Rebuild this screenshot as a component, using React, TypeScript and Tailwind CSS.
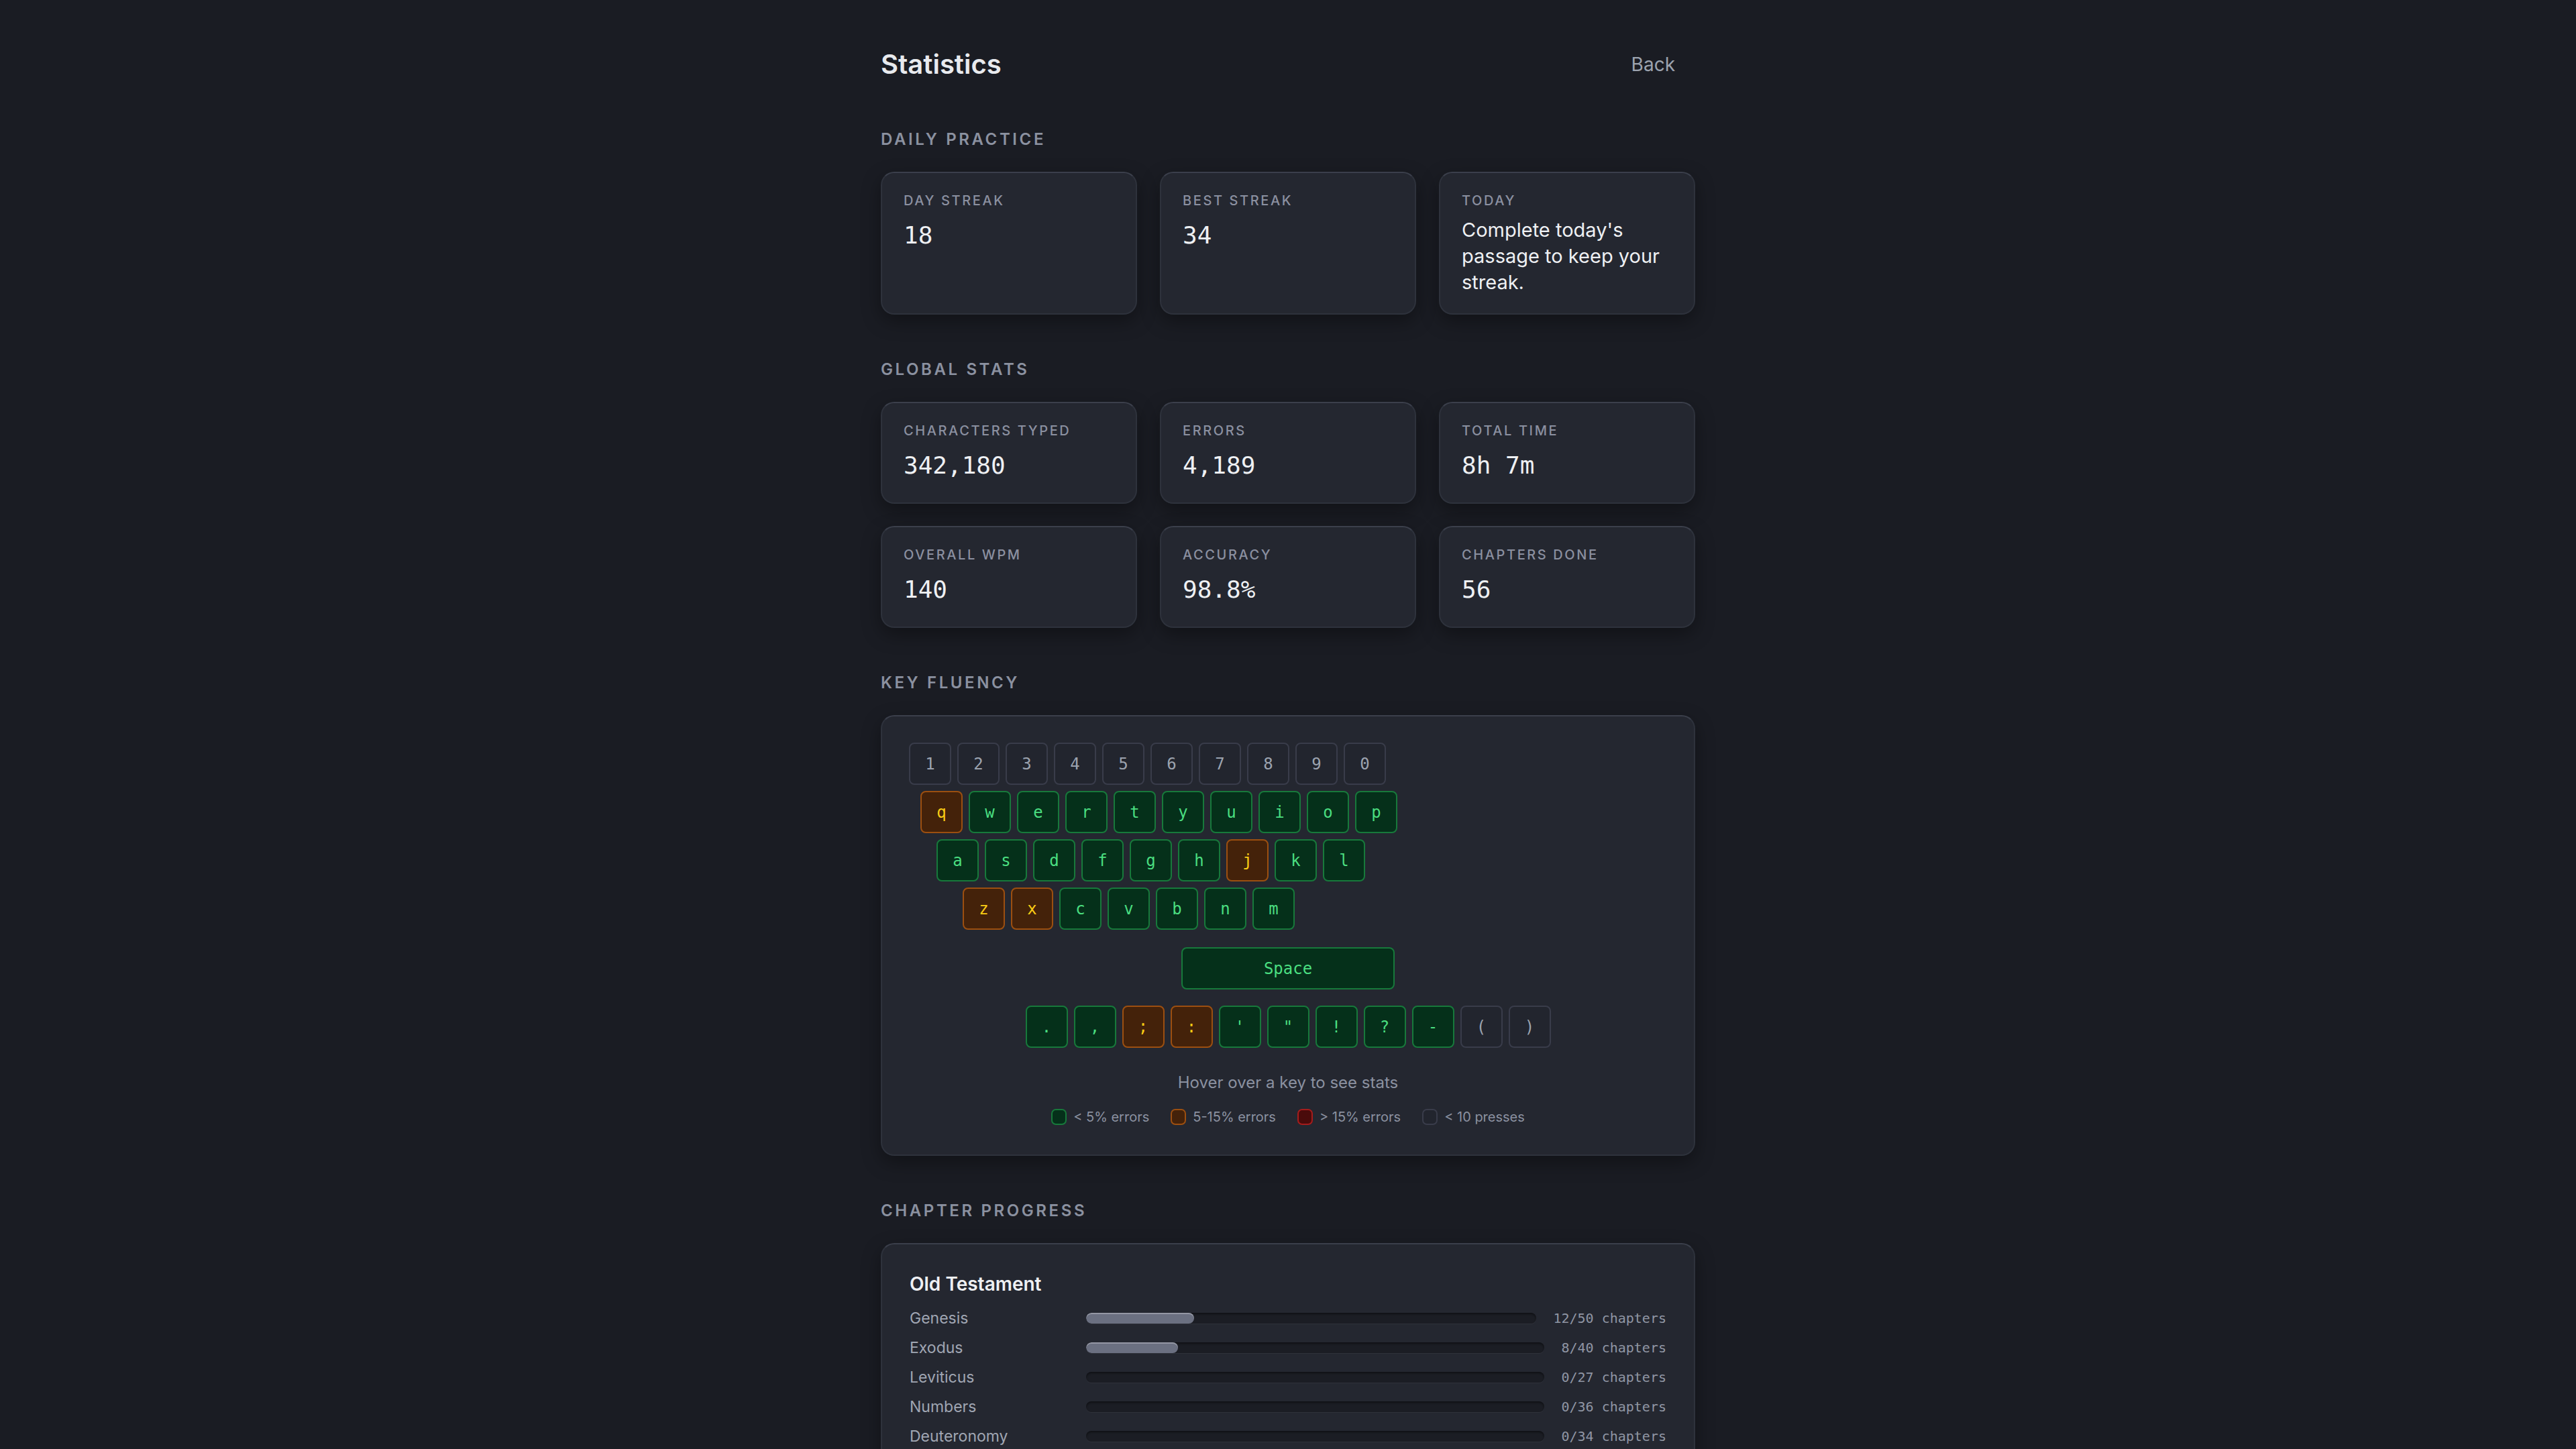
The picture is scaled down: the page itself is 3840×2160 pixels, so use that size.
import React from "react";

type Tone = "good" | "warn" | "bad" | "none";

const SANS = "font-['Inter','Noto_Sans',sans-serif]";
const MONO = "font-['DejaVu_Sans_Mono','Liberation_Mono',monospace]";

const KEY_STYLES: Record<Tone, string> = {
  good: "bg-[#05301a] border-[#17793b] text-[#4ade80]",
  warn: "bg-[#44220a] border-[#9c4f10] text-[#facc15]",
  bad: "bg-[#4a0b0b] border-[#a51c1c] text-[#fca5a5]",
  none: "bg-[#22252e] border-[#393c4a] text-[#9ca3af]",
};

type Key = { label: string; tone: Tone };

const k = (labels: string, tones: string): Key[] =>
  labels.split("").map((label, i) => ({
    label,
    tone: ({ g: "good", w: "warn", b: "bad", n: "none" } as const)[tones[i] as "g" | "w" | "b" | "n"],
  }));

const ROWS: { keys: Key[]; offset: string }[] = [
  { keys: k("1234567890", "nnnnnnnnnn"), offset: "ml-0" },
  { keys: k("qwertyuiop", "wggggggggg"), offset: "ml-[17px]" },
  { keys: k("asdfghjkl", "ggggggwgg"), offset: "ml-[41px]" },
  { keys: k("zxcvbnm", "wwggggg"), offset: "ml-[80px]" },
];

const PUNCT: Key[] = [
  { label: ".", tone: "good" },
  { label: ",", tone: "good" },
  { label: ";", tone: "warn" },
  { label: ":", tone: "warn" },
  { label: "'", tone: "good" },
  { label: '"', tone: "good" },
  { label: "!", tone: "good" },
  { label: "?", tone: "good" },
  { label: "-", tone: "good" },
  { label: "(", tone: "none" },
  { label: ")", tone: "none" },
];

const DAILY = [
  { label: "Day Streak", value: "18" },
  { label: "Best Streak", value: "34" },
];

const GLOBAL = [
  { label: "Characters Typed", value: "342,180" },
  { label: "Errors", value: "4,189" },
  { label: "Total Time", value: "8h 7m" },
  { label: "Overall WPM", value: "140" },
  { label: "Accuracy", value: "98.8%" },
  { label: "Chapters Done", value: "56" },
];

const BOOKS = [
  { name: "Genesis", done: 12, total: 50 },
  { name: "Exodus", done: 8, total: 40 },
  { name: "Leviticus", done: 0, total: 27 },
  { name: "Numbers", done: 0, total: 36 },
  { name: "Deuteronomy", done: 0, total: 34 },
];

const LEGEND: { tone: Tone; text: string }[] = [
  { tone: "good", text: "< 5% errors" },
  { tone: "warn", text: "5-15% errors" },
  { tone: "bad", text: "> 15% errors" },
  { tone: "none", text: "< 10 presses" },
];

const card =
  "rounded-[20px] border-2 border-[#2e323c] border-t-[#3b3f4b] bg-[#242730] shadow-[0_10px_28px_rgba(0,0,0,0.35)]";

function SectionTitle({ children }: { children: React.ReactNode }) {
  return (
    <h2 className="text-[24px] leading-[32px] font-semibold uppercase tracking-[0.15em] text-[#8b91a0]">
      {children}
    </h2>
  );
}

function StatLabel({ children }: { children: React.ReactNode }) {
  return (
    <div className="text-[20px] leading-[28px] font-medium uppercase tracking-[0.13em] text-[#8b90a0]">
      {children}
    </div>
  );
}

function KeyCap({ k, wide }: { k: Key; wide?: boolean }) {
  return (
    <div
      className={`${wide ? "w-[318px]" : "w-[63px]"} h-[63px] shrink-0 rounded-[8px] border-2 flex items-center justify-center text-[24px] ${MONO} ${KEY_STYLES[k.tone]}`}
    >
      {k.label}
    </div>
  );
}

export default function App() {
  return (
    <div className={`min-h-screen bg-[#1a1c23] ${SANS}`}>
      <div className="w-[1214px] mx-auto pt-[72px] pb-[80px]">
        {/* Header */}
        <header className="flex items-center justify-between">
          <h1 className="text-[40px] leading-[48px] font-semibold text-[#e8eaee]">Statistics</h1>
          <button className="px-[30px] py-[6px] text-[28px] leading-[36px] text-[#9ca3af]">Back</button>
        </header>

        {/* Daily practice */}
        <section className="mt-[72px]">
          <SectionTitle>Daily Practice</SectionTitle>
          <div className="mt-[32px] grid grid-cols-3 gap-x-[34px]">
            {DAILY.map((s) => (
              <div key={s.label} className={`${card} px-[32px] pt-[27px] pb-[27px]`}>
                <StatLabel>{s.label}</StatLabel>
                <div className={`mt-[10px] text-[36px] leading-[56px] text-[#eef0f3] ${MONO}`}>{s.value}</div>
              </div>
            ))}
            <div className={`${card} px-[32px] pt-[27px] pb-[27px]`}>
              <StatLabel>Today</StatLabel>
              <p className="mt-[10px] text-[29px] leading-[39px] text-[#eef0f3]">
                Complete today's passage to keep your streak.
              </p>
            </div>
          </div>
        </section>

        {/* Global stats */}
        <section className="mt-[66px]">
          <SectionTitle>Global Stats</SectionTitle>
          <div className="mt-[32px] grid grid-cols-3 gap-x-[34px] gap-y-[33px]">
            {GLOBAL.map((s) => (
              <div key={s.label} className={`${card} px-[32px] pt-[27px] pb-[27px]`}>
                <StatLabel>{s.label}</StatLabel>
                <div className={`mt-[10px] text-[36px] leading-[56px] text-[#eef0f3] ${MONO}`}>{s.value}</div>
              </div>
            ))}
          </div>
        </section>

        {/* Key fluency */}
        <section className="mt-[66px]">
          <SectionTitle>Key Fluency</SectionTitle>
          <div className={`${card} mt-[32px] px-[40px] pt-[39px] pb-[44px]`}>
            <div className="flex flex-col gap-[9px]">
              {ROWS.map((row, i) => (
                <div key={i} className={`flex gap-[9px] ${row.offset}`}>
                  {row.keys.map((key) => (
                    <KeyCap key={key.label} k={key} />
                  ))}
                </div>
              ))}
            </div>
            <div className="mt-[26px] flex justify-center">
              <KeyCap k={{ label: "Space", tone: "good" }} wide />
            </div>
            <div className="mt-[24px] flex justify-center gap-[9px]">
              {PUNCT.map((key) => (
                <KeyCap key={key.label} k={key} />
              ))}
            </div>
            <p className="mt-[36px] text-center text-[24px] leading-[32px] text-[#8b91a0]">
              Hover over a key to see stats
            </p>
            <div className="mt-[23px] flex justify-center gap-[32px]">
              {LEGEND.map((l) => (
                <div key={l.text} className="flex items-center gap-[10px] text-[20px] leading-[24px] text-[#8b91a0]">
                  <span className={`w-[23px] h-[24px] rounded-[7px] border-2 ${KEY_STYLES[l.tone]}`} />
                  {l.text}
                </div>
              ))}
            </div>
          </div>
        </section>

        {/* Chapter progress */}
        <section className="mt-[66px]">
          <SectionTitle>Chapter Progress</SectionTitle>
          <div className={`${card} mt-[32px] px-[41px] pt-[41px] pb-[40px]`}>
            <h3 className="text-[28px] leading-[36px] font-semibold text-[#eef0f3]">Old Testament</h3>
            <div className="mt-[17px] flex flex-col gap-[12px]">
              {BOOKS.map((b) => (
                <div key={b.name} className="flex items-center gap-[25px] h-[32px]">
                  <span className="w-[238px] shrink-0 text-[23px] leading-[32px] text-[#a0a6b3]">{b.name}</span>
                  <div className="flex-1 h-[16px] rounded-full bg-[#1b1d24] shadow-[inset_0_2px_3px_rgba(0,0,0,0.45),0_1px_0_rgba(255,255,255,0.05)] overflow-hidden">
                    <div
                      className="h-full rounded-full bg-[#6b7081] shadow-[inset_0_2px_0_rgba(255,255,255,0.28)]"
                      style={{ width: `${(b.done / b.total) * 100}%` }}
                    />
                  </div>
                  <span className={`shrink-0 text-[20px] leading-[32px] text-[#9096a4] ${MONO}`}>
                    {b.done}/{b.total} chapters
                  </span>
                </div>
              ))}
            </div>
          </div>
        </section>
      </div>
    </div>
  );
}
